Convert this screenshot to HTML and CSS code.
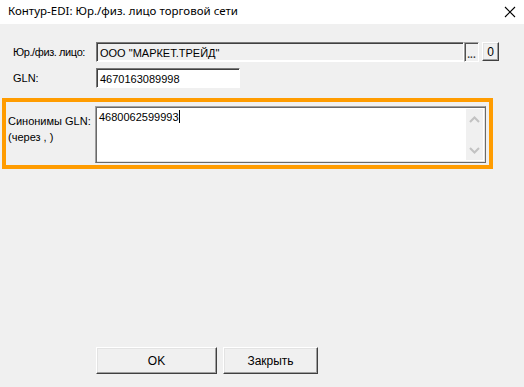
FILE: index.html
```html
<!DOCTYPE html>
<html lang="ru">

<head>
    <meta charset="UTF-8">
    <title>Контур-EDI: Юр./физ. лицо торговой сети</title>
    <link rel="stylesheet" href="styles.css">
</head>

<body>
    <div class="window">
        <div class="titlebar">
            <span class="title">Контур-EDI: Юр./физ. лицо торговой сети</span>
            <svg class="close" width="12" height="12" viewBox="0 0 12 12">
                <path d="M1 1 L11 11 M11 1 L1 11" stroke="#000" stroke-width="1.1" fill="none"/>
            </svg>
        </div>
        <div class="content">
            <div class="row" id="row-name">
                <label class="lbl narrow">Юр./физ. лицо:</label>
                <div class="field readonly wide">ООО "МАРКЕТ.ТРЕЙД"</div>
                <button class="btn small dots">...</button>
                <button class="btn small zero">0</button>
            </div>
            <div class="row" id="row-gln">
                <label class="lbl">GLN:</label>
                <div class="field gln">4670163089998</div>
            </div>
            <div class="highlight">
                <label class="lbl syn">Синонимы GLN:<br>(через , )</label>
                <div class="memo">
                    <div class="memo-text">4680062599993<span class="caret"></span></div>
                    <div class="scroll">
                        <svg width="11" height="7" viewBox="0 0 11 7"><path d="M1 6 L5.5 1.5 L10 6" stroke="#c2c2c2" stroke-width="2" fill="none"/></svg>
                        <svg width="11" height="7" viewBox="0 0 11 7"><path d="M1 1 L5.5 5.5 L10 1" stroke="#c2c2c2" stroke-width="2" fill="none"/></svg>
                    </div>
                </div>
            </div>
            <div class="buttons">
                <button class="btn big ok">OK</button>
                <button class="btn big close-btn">Закрыть</button>
            </div>
        </div>
    </div>
</body>

</html>
```

FILE: styles.css
```css
html,
body {
    margin: 0;
    padding: 0;
}

body {
    width: 524px;
    height: 387px;
    background: #f0f0f0;
    font-family: "Liberation Sans", Arial, sans-serif;
    font-size: 11px;
    color: #000;
    overflow: hidden;
}

.titlebar {
    height: 24px;
    background: #fff;
    display: flex;
    align-items: center;
    justify-content: space-between;
    padding: 0 8px 0 8px;
    box-sizing: border-box;
}

.title {
    font-family: "Noto Sans", sans-serif;
    font-size: 11.5px;
    line-height: 16px;
    margin-top: -2px;
}

.close {
    margin-right: 0;
}

.content {
    padding-top: 18px;
}

.row {
    display: flex;
    align-items: center;
    height: 20px;
}

#row-gln {
    margin-top: 6px;
}

.lbl {
    width: 83px;
    padding-left: 13px;
    flex-shrink: 0;
}

.narrow {
    letter-spacing: -0.4px;
}

.field {
    height: 20px;
    box-sizing: border-box;
    border: 1px solid;
    border-color: #7a7a7a #fff #fff #7a7a7a;
    box-shadow: inset 1px 1px 0 #404040;
    padding: 3px 0 0 3px;
    background: #fff;
    line-height: 14px;
}

.readonly {
    background: #f0f0f0;
    box-shadow: inset 1px 1px 0 #404040, inset 0 -1px 0 #fff;
}

.wide {
    width: 368px;
}

.gln {
    width: 144px;
}

.btn {
    font-family: "Liberation Sans", Arial, sans-serif;
    font-size: 12px;
    background: #f0f0f0;
    border: 1px solid;
    border-color: #fff #404040 #404040 #fff;
    box-shadow: inset -1px -1px 0 #a0a0a0, inset 1px 1px 0 #e3e3e3;
    padding: 0;
    color: #000;
}

.small {
    height: 20px;
}

.dots {
    width: 15px;
    font-weight: bold;
    font-size: 10px;
    line-height: 16px;
    color: #404040;
    border-color: #a0a0a0 #fff #fff #a0a0a0;
    box-shadow: inset 1px 1px 0 #505050;
    padding-top: 4px;
}

.zero {
    width: 17px;
    margin-left: 3px;
    height: 19px;
    align-self: flex-start;
}

.highlight {
    margin: 10px 0 0 2px;
    width: 491px;
    height: 71px;
    box-sizing: border-box;
    border: 4px solid #ff9c00;
    display: flex;
    align-items: flex-start;
    padding-top: 4px;
}

.syn {
    width: 89px;
    padding-left: 2px;
    padding-top: 7px;
    line-height: 16px;
    box-sizing: border-box;
}

.memo {
    width: 391px;
    height: 57px;
    box-sizing: border-box;
    border: 1px solid;
    border-color: #a0a0a0 #696969 #696969 #a0a0a0;
    box-shadow: inset 1px 1px 0 #696969, inset -1px -1px 0 #e3e3e3;
    background: #fff;
    display: flex;
    padding: 2px 2px 2px 2px;
}

.memo-text {
    flex: 1;
    padding: 1px 0 0 1px;
    line-height: 14px;
}

.caret {
    display: inline-block;
    width: 1px;
    height: 13px;
    background: #000;
    vertical-align: -2px;
}

.scroll {
    width: 17px;
    background: #f0f0f0;
    display: flex;
    flex-direction: column;
    justify-content: space-between;
    align-items: center;
    padding: 7px 0 6px 0;
}

.buttons {
    display: flex;
    gap: 6px;
    margin: 178px 0 0 96px;
}

.big {
    height: 27px;
}

.ok {
    width: 121px;
}

.close-btn {
    width: 95px;
}
```
